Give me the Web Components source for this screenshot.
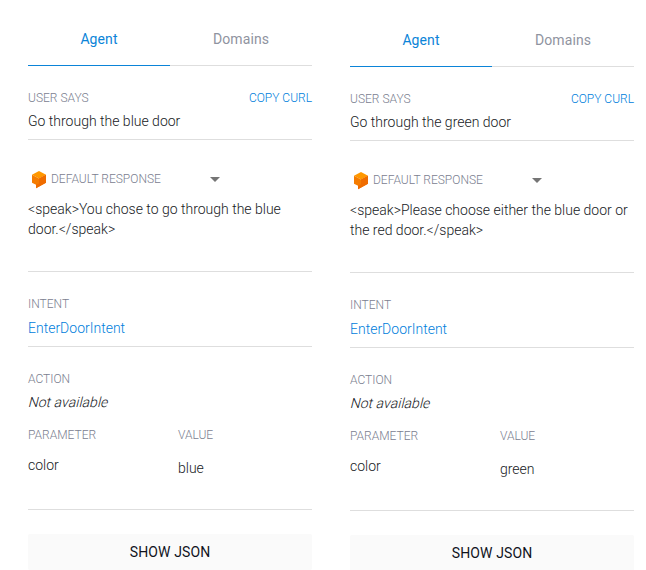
<!DOCTYPE html>
<html lang="en"><head><meta charset="utf-8"><title>Agent test console</title>
<style>html,body{margin:0;background:#fff}body{width:646px;height:570px;overflow:hidden;font-family:Roboto,sans-serif;color:#171a24}</style></head>
<body>
<console-page></console-page>
<script>
class AgentLabel extends HTMLElement{
  constructor(){super();this.attachShadow({mode:'open'}).innerHTML=`<style>:host{display:block;font-size:12px;line-height:16px;font-weight:300;color:#7b8090;white-space:nowrap}</style><slot></slot>`}
}
customElements.define('agent-label',AgentLabel);

class AgentSection extends HTMLElement{
  constructor(){super();this.attachShadow({mode:'open'}).innerHTML=`<style>:host{display:block;box-sizing:border-box;border-bottom:1px solid #dedede;font-size:14px;line-height:20px;font-weight:300}</style><slot></slot>`}
}
customElements.define('agent-section',AgentSection);

class AgentTabs extends HTMLElement{
  constructor(){super();this.attachShadow({mode:'open'}).innerHTML=`<style>
  :host{display:grid;grid-template-columns:1fr 1fr;height:42px;text-align:center;font-size:14px;font-weight:400;letter-spacing:.1px;line-height:20px;color:#8f93a0}
  div{box-sizing:border-box;padding-top:5px;border-bottom:1px solid #dedede}
  .on{color:#0b84d8;border-bottom-color:#0b84d8}</style><div class="on">Agent</div><div>Domains</div>`}
}
customElements.define('agent-tabs',AgentTabs);

class AgentPanel extends HTMLElement{
  connectedCallback(){
    const a=n=>this.getAttribute(n);
    this.attachShadow({mode:'open'}).innerHTML=`<style>
    :host{display:block;width:284px}
    .says{height:74px;padding-top:24px}
    .row{display:flex;justify-content:space-between}
    .link{color:#0080dc}
    .text{margin-top:5px}
    .resp{height:132px;padding-top:30px}
    .resp .row{justify-content:flex-start;align-items:center;height:18px}
    .logo{margin:1px 4px 0 3px;display:block}
    .arrow{margin-left:49.6px;display:block}
    .speak{margin-top:11px;white-space:pre-line}
    .intent{height:75px;padding-top:24px}
    .intent .text{margin-top:6px}
    .action{height:163px;padding-top:24px}
    .slanted{width:max-content;margin:5px 0 0 1px;transform:skewX(-14deg);letter-spacing:.03px}
    .params{display:grid;grid-template-columns:150px 1fr;margin-top:15px}
    .key{margin-top:12px}.value{margin-top:15px}
    button{display:block;width:100%;height:36px;margin-top:24px;border:0;padding:0;border-radius:2px;background:#fafafa;font:400 14px/36px Roboto,sans-serif;letter-spacing:.12px;color:#10131c}
    </style>
    <agent-tabs></agent-tabs>
    <agent-section class="says"><div class="row"><agent-label>USER SAYS</agent-label><agent-label class="link">COPY CURL</agent-label></div><div class="text">${a('query')}</div></agent-section>
    <agent-section class="resp"><div class="row"><svg class="logo" width="16" height="18" viewBox="0 0 16 18"><path fill="#ff9800" d="M8 0 15 3.7 8 7.6 1 3.7z"/><path fill="#f57c00" d="M1 3.7 8 7.6l7-3.9v8L5 17.2v-3.4L1 11.7z"/><path fill="#ef6c00" d="M8 7.6l7-3.9v8L5 17.2v-3.4L8 12.5z"/></svg><agent-label>DEFAULT RESPONSE</agent-label><svg class="arrow" width="10" height="5" viewBox="0 0 10 5"><path fill="#757575" d="M0 0h10L5 5z"/></svg></div><div class="speak"></div></agent-section>
    <agent-section class="intent"><agent-label>INTENT</agent-label><div class="text link">EnterDoorIntent</div></agent-section>
    <agent-section class="action"><agent-label>ACTION</agent-label><div class="slanted">Not available</div><div class="params"><div><agent-label>PARAMETER</agent-label><div class="key">color</div></div><div><agent-label>VALUE</agent-label><div class="value">${a('value')}</div></div></div></agent-section>
    <button>SHOW JSON</button>`;
    this.shadowRoot.querySelector('.speak').textContent=a('speech');
  }
}
customElements.define('agent-panel',AgentPanel);

class ConsolePage extends HTMLElement{
  constructor(){super();this.attachShadow({mode:'open'}).innerHTML=`<style>
  :host{display:flex;gap:38px;padding:24px 0 0 28px}
  .second{margin-top:1px}</style>
  <agent-panel query="Go through the blue door" value="blue" speech="&lt;speak&gt;You chose to go through the blue&#10;door.&lt;/speak&gt;"></agent-panel>
  <agent-panel class="second" query="Go through the green door" value="green" speech="&lt;speak&gt;Please choose either the blue door or&#10;the red door.&lt;/speak&gt;"></agent-panel>`}
}
customElements.define('console-page',ConsolePage);
</script></body></html>
